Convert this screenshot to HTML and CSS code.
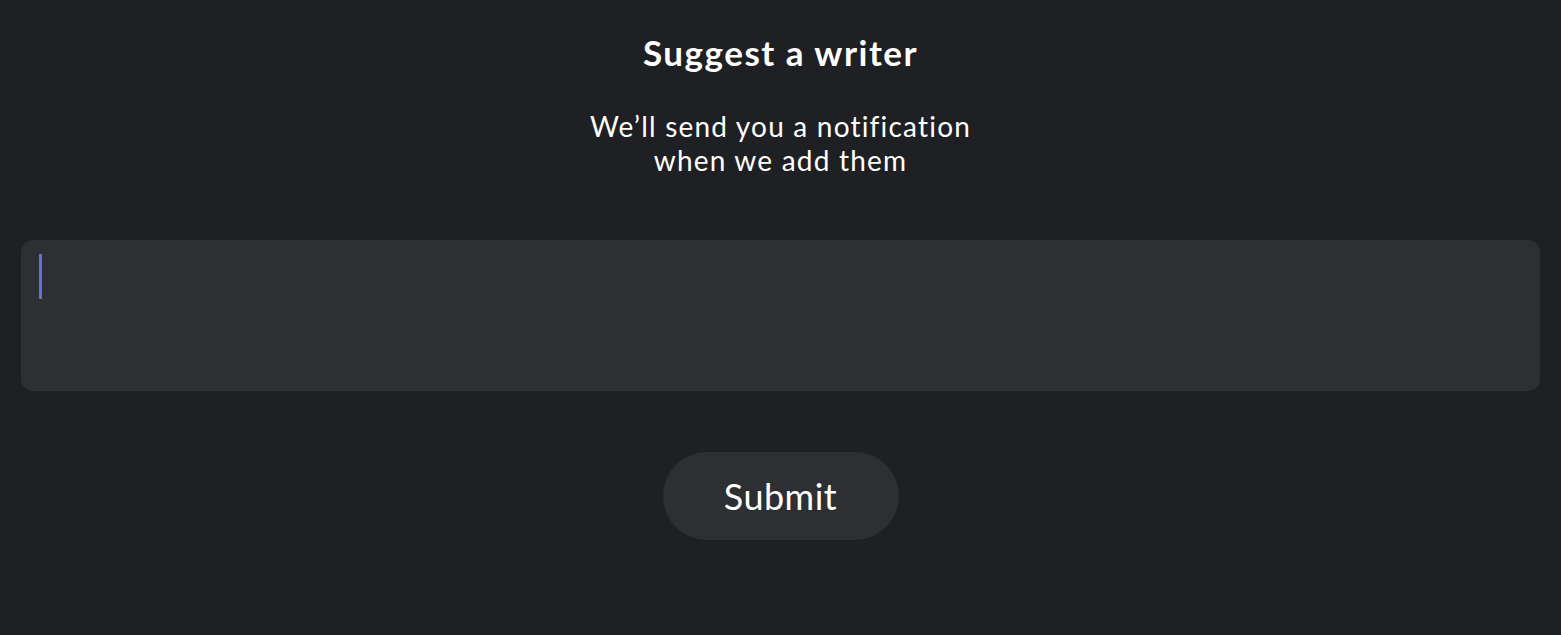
FILE: index.html
```html
<!DOCTYPE html>
<html lang="en">
<head>
<meta charset="utf-8">
<title>Suggest a writer</title>
<link rel="stylesheet" href="styles.css">
</head>
<body>
<main class="panel">
  <h1 class="title">Suggest a writer</h1>
  <p class="subtitle">We’ll send you a notification<br>when we add them</p>
  <div class="field" role="textbox" aria-multiline="true"><span class="caret"></span></div>
  <button class="submit" type="button">Submit</button>
</main>
</body>
</html>
```

FILE: styles.css
```css
html, body {
  margin: 0;
  padding: 0;
  background: #1f2023;
  height: 100%;
}
body {
  font-family: Lato, "Noto Sans", sans-serif;
  color: #ffffff;
}
.panel {
  display: flex;
  flex-direction: column;
  align-items: center;
  padding: 30px 21px 0 21px;
}
.title {
  margin: 0;
  font-size: 35px;
  font-weight: 700;
  line-height: 44px;
  letter-spacing: 1.5px;
}
.subtitle {
  margin: 35px 0 0 0;
  font-size: 28px;
  font-weight: 400;
  line-height: 34px;
  letter-spacing: 1.2px;
  text-align: center;
}
.field {
  align-self: stretch;
  box-sizing: border-box;
  height: 151px;
  margin-top: 63px;
  background: #2e2f33;
  border-radius: 12px;
  padding: 14px 18px;
}
.caret {
  display: block;
  width: 3px;
  height: 45px;
  background: #5f72d8;
}
.submit {
  margin-top: 61px;
  width: 236px;
  height: 88px;
  border: none;
  border-radius: 44px;
  background: #2e2f33;
  color: #ffffff;
  font-family: Lato, "Noto Sans", sans-serif;
  font-size: 36px;
  font-weight: 400;
  letter-spacing: 0.5px;
  cursor: pointer;
}
```
